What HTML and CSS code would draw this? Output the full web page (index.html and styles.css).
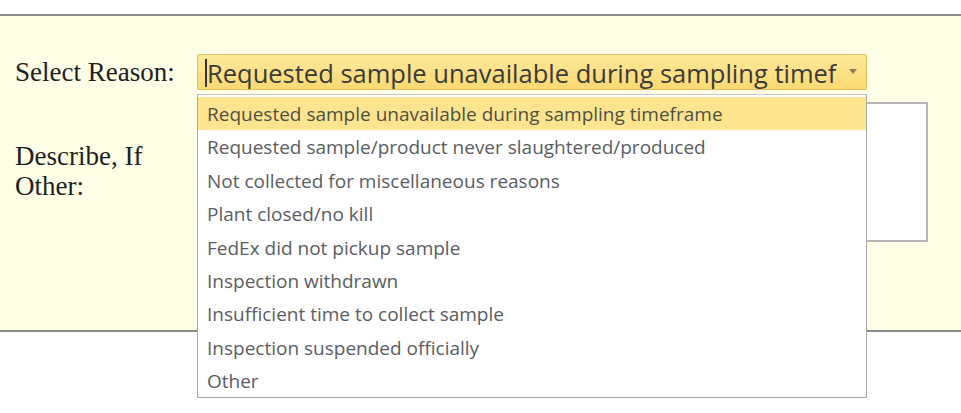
FILE: index.html
```html
<!DOCTYPE html>
<html>
<head>
<meta charset="utf-8">
<link rel="stylesheet" href="styles.css">
</head>
<body>
<div class="page">
  <div class="panel">
    <div class="form">
      <div class="label label-select">Select Reason:</div>
      <div class="select-wrap">
        <div class="select">
          <span class="caret"></span>
          <span class="select-text">Requested sample unavailable during sampling timef</span>
          <span class="arrow"></span>
        </div>
        <ul class="dropdown">
          <li class="item active">Requested sample unavailable during sampling timeframe</li>
          <li class="item">Requested sample/product never slaughtered/produced</li>
          <li class="item">Not collected for miscellaneous reasons</li>
          <li class="item">Plant closed/no kill</li>
          <li class="item">FedEx did not pickup sample</li>
          <li class="item">Inspection withdrawn</li>
          <li class="item">Insufficient time to collect sample</li>
          <li class="item">Inspection suspended officially</li>
          <li class="item">Other</li>
        </ul>
      </div>
      <div class="label label-describe">Describe, If<br>Other:</div>
      <div class="textarea"></div>
    </div>
  </div>
</div>
</body>
</html>
```
FILE: styles.css
```css
html, body {
  margin: 0;
  padding: 0;
  background: #ffffff;
}
.page {
  padding-top: 14px;
  width: 961px;
  height: 413px;
  box-sizing: border-box;
  overflow: hidden;
}
.panel {
  background: #fffee6;
  border-top: 2px solid #8a8a8a;
  border-bottom: 2px solid #8a8a8a;
  height: 318px;
  box-sizing: border-box;
  padding: 38px 0 0 15px;
}
.form {
  display: grid;
  grid-template-columns: 182px 731px;
  row-gap: 12px;
}
.label {
  font-family: "Liberation Serif", "Times New Roman", serif;
  font-size: 27px;
  line-height: 30px;
  color: #1e1e1e;
}
.label-select {
  align-self: center;
}
.label-describe {
  padding-top: 39px;
}
.select-wrap {
  position: relative;
  width: 670px;
  z-index: 2;
}
.select {
  height: 36px;
  box-sizing: border-box;
  border: 1px solid #e3bf5a;
  border-radius: 2px;
  background: linear-gradient(#fde99a, #fcd972);
  display: flex;
  align-items: center;
  padding: 2px 0 0 7px;
  font-family: "Open Sans", "Noto Sans", sans-serif;
  font-size: 25.5px;
  color: #3a3a3a;
  white-space: nowrap;
  overflow: hidden;
}
.caret {
  width: 2px;
  height: 28px;
  background: #333333;
  flex: none;
}
.select-text {
  flex: 1;
  overflow: hidden;
}
.arrow {
  flex: none;
  width: 0;
  height: 0;
  border-left: 4.5px solid transparent;
  border-right: 4.5px solid transparent;
  border-top: 5px solid #8a7a55;
  margin: 0 9px 4px 12px;
}
.dropdown {
  position: absolute;
  top: 40px;
  left: 0;
  width: 670px;
  margin: 0;
  padding: 2px 0 0 0;
  list-style: none;
  background: #ffffff;
  border: 1px solid #a8a8a8;
  border-top-color: #c8c8c8;
  box-sizing: border-box;
  height: 304px;
}
.item {
  height: 33.4px;
  line-height: 34px;
  padding-left: 9px;
  font-family: "Open Sans", "Noto Sans", sans-serif;
  font-size: 19px;
  color: #5a5d62;
  white-space: nowrap;
}
.item.active {
  background: #fde58f;
  color: #4f4f45;
}
.textarea {
  grid-column: 2;
  height: 140px;
  background: #ffffff;
  border: 2px solid #b5b5b5;
  box-sizing: border-box;
}
```
